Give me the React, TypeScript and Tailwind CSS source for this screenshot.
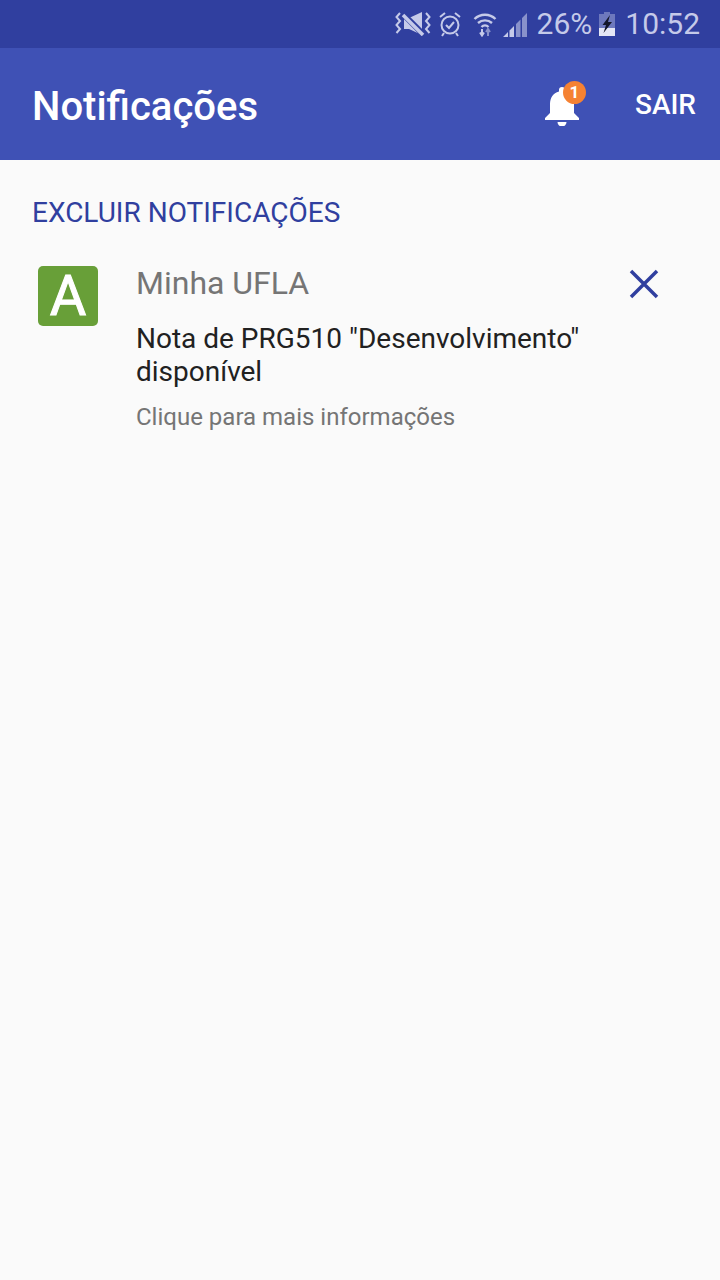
export default function App() {
  return (
    <div className="flex h-[1280px] w-[720px] flex-col overflow-hidden bg-[#fafafa] font-['Roboto',sans-serif]">
      <div className="flex h-12 items-center justify-end bg-[#303f9f] pr-5 text-[#c5cae9]">
        <svg width="36" height="24" viewBox="0 0 36 24" className="mr-[7px]" fill="none">
          <path d="M5 1L1.500 5 5 9l-3.500 4L5 17l-3.500 4M31 1l3.500 4L31 9l3.500 4-3.500 4 3.500 4" stroke="currentColor" strokeWidth="2" />
          <path d="M9 6h5l13-6v23l-13-6H9z" fill="currentColor" />
          <path d="M8 2l21 21" stroke="#303f9f" strokeWidth="6" />
          <path d="M8 3l20 20" stroke="currentColor" strokeWidth="3.500" />
        </svg>
        <svg width="24" height="26" viewBox="0 0 24 26" className="mr-[11px]" fill="none" stroke="currentColor">
          <circle cx="12" cy="14" r="8.500" strokeWidth="2" />
          <path d="M8 14l3 3 5-6" strokeWidth="2" />
          <path d="M2 6l5-4M22 6l-5-4M6 22l-2 3M18 22l2 3" strokeWidth="2" />
        </svg>
        <svg width="24" height="26" viewBox="0 0 24 26" className="mr-[6px]" fill="none" stroke="currentColor">
          <path d="M1.500 8a15 15 0 0 1 21 0M5 12a10.500 10.500 0 0 1 14 0M8.500 16a5 5 0 0 1 7 0" strokeWidth="2.400" />
          <path d="M9 18v6M7 21.500l2 3 2-3" strokeWidth="2" />
          <path d="M15 25v-6M13 21l2-3 2 3" strokeWidth="2" opacity=".6" />
        </svg>
        <svg width="24" height="24" viewBox="0 0 24 24" className="mr-[10px] mt-px" fill="currentColor">
          <path d="M0 24l5-5v5zM6.500 17.500L11 13v11H6.500z" />
          <path d="M13 11l4.500-4.500V24H13zM19 5l5-5v24h-5z" opacity=".6" />
        </svg>
        <span className="mr-[7px] text-[30px] leading-none">26%</span>
        <svg width="16" height="24" viewBox="0 0 16 24" className="mr-[10px]">
          <path d="M5 0h6v2h5v22H0V2h5z" fill="#6d78bd" />
          <path d="M0 16h16v8H0z" fill="#e4e6f5" />
          <path d="M11 3L3.500 13H7l-2.500 8L13 10H9z" fill="#14172a" />
        </svg>
        <span className="text-[30px] leading-none">10:52</span>
      </div>

      <div className="flex h-28 items-center bg-[#3f51b5] pl-8 pr-6 text-white">
        <h1 className="flex-1 pt-[6px] text-[40px] font-medium leading-none">Notificações</h1>
        <div className="relative mr-[54px] mt-[3px] h-10 w-[38px]">
          <svg width="38" height="40" viewBox="0 0 38 40" fill="white">
            <path d="M19 1a3 3 0 0 1 3 3v1.500C28 7 31 12 31 18v9l5 5v2H2v-2l5-5v-9c0-6 3-11 9-12.500V4a3 3 0 0 1 3-3z" />
            <path d="M14.500 36h9a4.500 4.500 0 0 1-9 0z" />
          </svg>
          <span className="absolute left-[20px] top-[-5px] flex h-[23px] w-[23px] items-center justify-center rounded-full bg-[#f58233] text-[17px] font-bold leading-none">1</span>
        </div>
        <span className="pt-[2px] text-[28px] font-medium leading-none">SAIR</span>
      </div>

      <div className="pl-8 pt-[37px] text-[28px] leading-[32px] text-[#303f9f]">
        EXCLUIR NOTIFICAÇÕES
      </div>

      <div className="mt-[37px] flex pl-[38px]">
        <div className="flex h-[60px] w-[60px] items-center justify-center rounded-[5px] bg-[#689f38] text-[56px] leading-none text-white [-webkit-text-stroke:1px_white]">A</div>
        <div className="ml-[38px] w-[490px]">
          <div className="mt-[-1px] text-[32px] leading-9 text-[#757575]">Minha UFLA</div>
          <div className="mt-[21px] text-[28px] leading-[33px] text-[#212121]">Nota de PRG510 "Desenvolvimento" disponível</div>
          <div className="mt-[13px] text-[24px] leading-8 text-[#757575]">Clique para mais informações</div>
        </div>
        <svg width="30" height="30" viewBox="0 0 30 30" className="ml-[3px] mt-[3px]" fill="none" stroke="#303f9f" strokeWidth="3.500">
          <path d="M2 2l26 26M28 2L2 28" />
        </svg>
      </div>
    </div>
  );
}
